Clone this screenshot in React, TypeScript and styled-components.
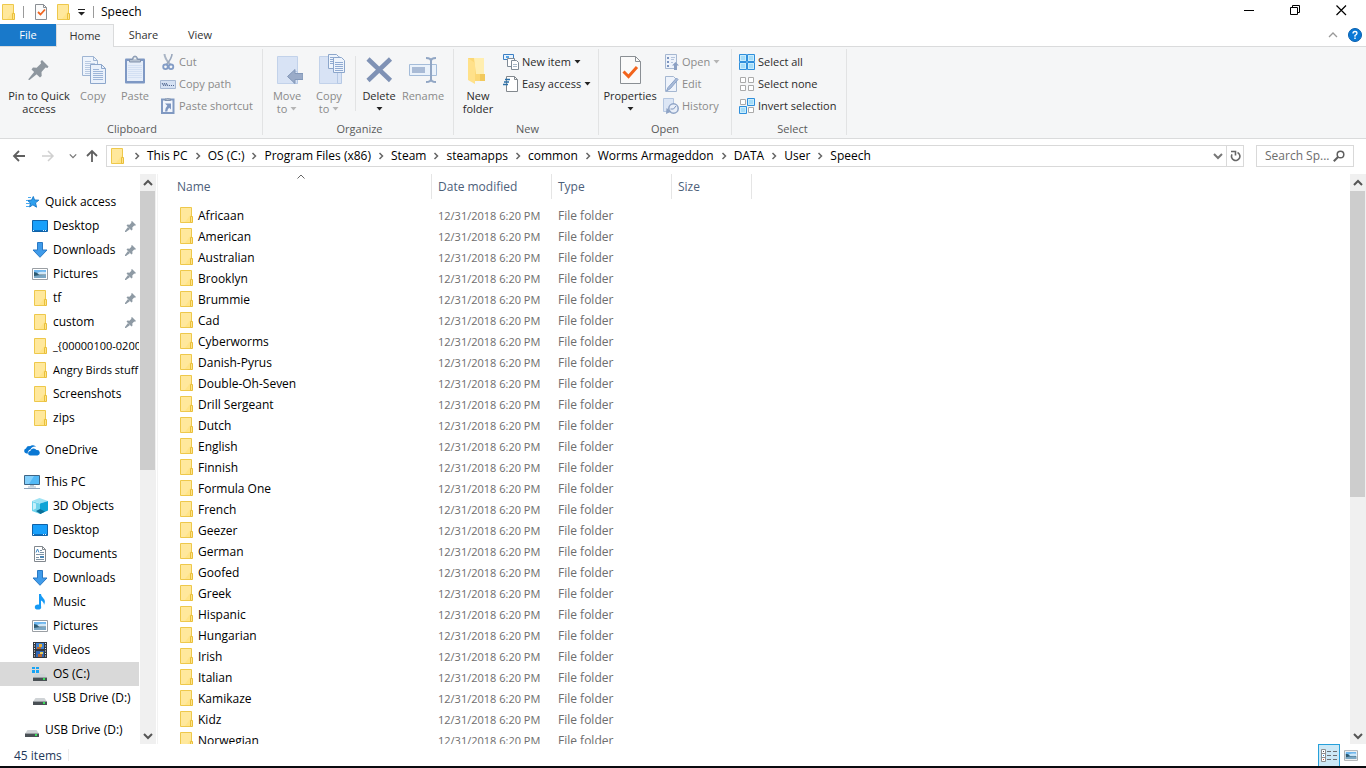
import React from "react";
import styled, { createGlobalStyle, css } from "styled-components";

const GlobalStyle = createGlobalStyle`
  *, *::before, *::after { box-sizing: border-box; }
  html, body { margin: 0; padding: 0; }
  body, button, input { font-family: "Open Sans", "Noto Sans", sans-serif; font-size: 12px; line-height: 16px; }
  body { background: #fff; color: #000; overflow: hidden; }
  button { margin: 0; padding: 0; border: 0; background: none; color: inherit; cursor: default; }
  svg { display: block; flex: none; }
`;

/* ---------- shell ---------- */

const Window = styled.div`
  display: flex;
  flex-direction: column;
  height: 100vh;
  border-bottom: 2px solid #0b0b0f;
`;

const TitleBar = styled.header`
  display: flex;
  align-items: center;
  height: 24px;
  flex: none;
  padding: 0 2px;
`;

const QuickButton = styled.button<{ $before?: number; $after?: number }>`
  display: flex;
  align-items: center;
  justify-content: center;
  margin-left: ${(p) => p.$before ?? 0}px;
  margin-right: ${(p) => p.$after ?? 7}px;
`;

const TitleRule = styled.span`
  width: 1px;
  height: 12px;
  background: #9a9a9a;
`;

const TitleText = styled.h1`
  flex: 1;
  margin: 0 0 0 7px;
  font-size: 12px;
  font-weight: 400;
`;

const WindowButton = styled.button`
  display: flex;
  align-items: flex-start;
  justify-content: center;
  width: 46px;
  height: 24px;
  padding-top: 5px;
`;

const TabRow = styled.nav`
  display: flex;
  height: 23px;
  flex: none;
  border-bottom: 1px solid #dadbdc;
`;

const Tab = styled.button<{ $kind?: "file" | "active"; $width: number }>`
  width: ${(p) => p.$width}px;
  height: 22px;
  color: #333;
  font-size: 11px;
  ${(p) =>
    p.$kind === "file" &&
    css`
      background: #1979ca;
      color: #fff;
    `}
  ${(p) =>
    p.$kind === "active" &&
    css`
      height: 23px;
      background: #f5f6f7;
      border: solid #dadbdc;
      border-width: 1px 1px 0;
    `}
`;

const TabTools = styled.div`
  display: flex;
  align-items: center;
  gap: 10px;
  margin-left: auto;
  padding-right: 4px;
`;

/* ---------- ribbon ---------- */

const Ribbon = styled.section`
  display: flex;
  height: 92px;
  flex: none;
  padding: 2px 0 3px;
  background: #f5f6f7;
  border-bottom: 1px solid #dadbdc;
`;

const Group = styled.div<{ $width: number; $pad: number }>`
  display: flex;
  flex-direction: column;
  justify-content: space-between;
  width: ${(p) => p.$width}px;
  border-right: 1px solid #e2e3e4;
  padding-left: ${(p) => p.$pad}px;
`;

const GroupBody = styled.div`
  display: flex;
  padding-top: 2px;
`;

const GroupLabel = styled.div`
  text-align: center;
  color: #5a5a5a;
  font-size: 11px;
  line-height: 12px;
`;

const BigButton = styled.button<{ $width: number; $disabled?: boolean }>`
  display: flex;
  flex-direction: column;
  align-items: center;
  width: ${(p) => p.$width}px;
  padding-top: 3px;
  font-size: 11px;
  line-height: 13px;
  white-space: nowrap;
  color: ${(p) => (p.$disabled ? "#8a8a8a" : "#2b2b2b")};
  svg + span { margin-top: 3px; }
`;

const LabelLine = styled.span`
  display: flex;
  align-items: center;
  gap: 3px;
  height: 13px;
`;

const ButtonRule = styled.span`
  width: 1px;
  height: 55px;
  margin: 5px 4px 0 5px;
  background: #e2e3e4;
`;

const SmallStack = styled.div<{ $before?: number }>`
  display: flex;
  flex-direction: column;
  margin-left: ${(p) => p.$before ?? 0}px;
`;

const SmallButton = styled.button<{ $disabled?: boolean }>`
  display: flex;
  align-items: center;
  gap: 3px;
  height: 22px;
  font-size: 11px;
  white-space: nowrap;
  color: ${(p) => (p.$disabled ? "#8a8a8a" : "#2b2b2b")};
`;

/* ---------- address row ---------- */

const AddressRow = styled.div`
  display: flex;
  align-items: center;
  height: 35px;
  flex: none;
  padding: 0 12px 2px 7px;
`;

const NavButton = styled.button<{ $width: number }>`
  display: flex;
  justify-content: center;
  width: ${(p) => p.$width}px;
`;

const AddressBox = styled.div`
  display: flex;
  align-items: center;
  flex: 1;
  height: 22px;
  margin-left: 2px;
  padding-left: 4px;
  border: 1px solid #d9d9d9;
`;

const Crumbs = styled.div`
  display: flex;
  flex: 1;
  margin-left: 2px;
`;

const Crumb = styled.button`
  display: flex;
  align-items: center;
  white-space: nowrap;
`;

const CrumbArrow = styled.span`
  display: flex;
  justify-content: center;
  width: 20px;
`;

const AddressEnd = styled.button<{ $ruled?: boolean }>`
  display: flex;
  align-items: center;
  justify-content: center;
  width: 17px;
  height: 20px;
  ${(p) => p.$ruled && "border-left: 1px solid #d9d9d9;"}
`;

const SearchBox = styled.label`
  display: flex;
  align-items: center;
  width: 98px;
  height: 22px;
  margin-left: 12px;
  padding: 0 8px;
  border: 1px solid #d9d9d9;
`;

const SearchInput = styled.input`
  flex: 1;
  min-width: 0;
  padding: 0;
  border: 0;
  outline: 0;
  background: none;
  &::placeholder { color: #6d6d6d; opacity: 1; }
`;

/* ---------- content ---------- */

const Main = styled.div`
  display: flex;
  flex: 1;
  min-height: 0;
`;

const Sidebar = styled.nav`
  width: 140px;
  flex: none;
  overflow: hidden;
  padding-top: 16px;
`;

const TreeSection = styled.div`
  margin-bottom: 8px;
`;

const TreeItem = styled.a<{ $root?: boolean; $selected?: boolean; $dense?: boolean }>`
  display: flex;
  align-items: center;
  gap: 5px;
  height: 24px;
  margin-right: 1px;
  padding-left: ${(p) => (p.$root ? 24 : 32)}px;
  color: #000;
  font-size: ${(p) => (p.$dense ? 11 : 12)}px;
  text-decoration: none;
  white-space: nowrap;
  overflow: hidden;
  background: ${(p) => (p.$selected ? "#d9d9d9" : "transparent")};
`;

const PinSlot = styled.span`
  margin-left: auto;
  padding-right: 3px;
`;

const ScrollTrack = styled.div`
  display: flex;
  flex-direction: column;
  width: 16px;
  flex: none;
  background: #f0f0f0;
`;

const ScrollButton = styled.button`
  display: flex;
  align-items: center;
  justify-content: center;
  width: 15px;
  height: 17px;
  flex: none;
`;

const ScrollRail = styled.div`
  flex: 1;
`;

const ScrollThumb = styled.div<{ $size: number }>`
  height: ${(p) => p.$size}%;
  margin-right: 1px;
  background: #cdcdcd;
`;

const FilePane = styled.main`
  flex: 1;
  min-width: 0;
  overflow: hidden;
  margin-left: 1px;
  padding-left: 2px;
  border-left: 1px solid #f3f3f3;
`;

const FileTable = styled.table`
  table-layout: fixed;
  width: 592px;
  border-collapse: collapse;
`;

const HeadCell = styled.th`
  height: 31px;
  padding: 0;
  vertical-align: top;
  text-align: left;
  font-weight: 400;
  color: #4c607a;
`;

const HeadLabel = styled.div<{ $pad?: number }>`
  position: relative;
  height: 25px;
  padding-left: ${(p) => p.$pad ?? 6}px;
  line-height: 25px;
  border-right: 1px solid #e5e5e5;
`;

const SortMark = styled.span`
  position: absolute;
  top: 0;
  left: 137px;
`;

const Cell = styled.td<{ $small?: boolean }>`
  height: 21px;
  padding: 0 0 0 6px;
  color: #6d6d6d;
  font-size: ${(p) => (p.$small ? 11 : 12)}px;
  white-space: nowrap;
`;

const FileName = styled.div`
  display: flex;
  align-items: center;
  gap: 4px;
  height: 21px;
  padding-left: 14px;
  color: #000;
  svg { margin-bottom: 1px; }
`;

const StatusBar = styled.footer`
  display: flex;
  align-items: center;
  height: 22px;
  flex: none;
  padding: 0 4px 0 14px;
  color: #1e395b;
`;

const StatusText = styled.span`
  padding-top: 2px;
`;

const StatusRule = styled.span`
  width: 1px;
  height: 12px;
  margin-left: 6px;
  background: #ececec;
`;

const ViewButtons = styled.div`
  display: flex;
  margin-left: auto;
`;

const ViewButton = styled.button<{ $active?: boolean }>`
  display: flex;
  align-items: center;
  justify-content: center;
  width: 22px;
  height: 22px;
  ${(p) => p.$active && "background: #cce8f6; border: 1px solid #26a0da; border-bottom: 0;"}
`;

/* ---------- icons ---------- */

const FolderIcon = ({ wide = false }: { wide?: boolean }) => (
  <svg width={wide ? 16 : 14} height="16" viewBox={wide ? "-2 0 16 16" : "0 0 14 16"} fill="none">
    <path d="M.5.5h11v15H.5z" fill="#ffe488" stroke="#eec84b" />
    <path d="M1 1h10v6L5 15H1z" fill="#ffe89c" />
    <path d="M10.500 9.500h2v6h-2z" fill="#ffe488" stroke="#e9bf3c" />
  </svg>
);

const CheckDocIcon = () => (
  <svg width="13" height="16" viewBox="0 0 13 16" fill="none">
    <path d="M.5.5h8l3 3v12H.5z" fill="#fbfbfb" stroke="#8a8f94" />
    <path d="M8.500.5v3h3" stroke="#8a8f94" />
    <path d="m3 8 2.500 2.500 4.500-5" stroke="#f0641e" strokeWidth="1.800" />
  </svg>
);

const Caret = ({ color = "#222" }: { color?: string }) => (
  <svg width="7" height="4" viewBox="0 0 7 4">
    <path d="M.5 0h6L3.500 3.500z" fill={color} />
  </svg>
);

const PinBigIcon = () => (
  <svg width="32" height="32" viewBox="0 0 32 32" fill="#8e979f">
    <path d="M19 6 25.500 12.500 24.500 14 22.500 13.500 18.500 18 18.700 22 17 23.500 8.500 15.500 10 13.500 13.700 13.700 18 9.500 17.500 7.500z" />
    <path d="M11.500 17.500 14 20 6.500 26H5.500V25z" />
  </svg>
);

const PinIcon = () => (
  <svg width="11" height="11" viewBox="0 0 11 11" fill="#8e9aa4">
    <path d="M7 0l4 4-1 .8-.8-.2L7.300 6.500l.2 2-1 1L1.500 4.500l1-1 2 .2L6.400 1.800 6.200.8z" />
    <path d="m3 6 2 2-4 3H0v-1z" />
  </svg>
);

const CopyIcon = () => (
  <svg width="32" height="32" viewBox="0 0 32 32">
    <path d="M5.500 2.500h11l4 4v15h-15z" fill="#eef4fc" stroke="#9fb5d3" />
    <path d="M16.500 2.500v4h4" fill="none" stroke="#9fb5d3" />
    <path d="M8 7.500h6M8 9.500h10M8 11.500h10M8 13.500h10M8 15.500h10M8 17.500h10M8 19.500h10" stroke="#b9cae2" />
    <path d="M13.500 10.500h11l4 4v15h-15z" fill="#eaf1fb" stroke="#8ca6cb" />
    <path d="M24.500 10.500v4h4" fill="none" stroke="#8ca6cb" />
    <path d="M16 15.500h6M16 17.500h10M16 19.500h10M16 21.500h10M16 23.500h10M16 25.500h10" stroke="#9db5d8" />
  </svg>
);

const PasteIcon = () => (
  <svg width="32" height="32" viewBox="0 0 32 32">
    <path d="M6 5.500q0-1 1-1h18q1 0 1 1v23q0 1-1 1H7q-1 0-1-1z" fill="#7e98c4" />
    <path d="M8 7h16v20H8z" fill="#e6eefa" />
    <path d="M9 11.500h14M9 13.500h14M9 15.500h14M9 17.500h14M9 19.500h14M9 21.500h14M9 23.500h14" stroke="#d3e0f3" />
    <path d="M10.500 8V5.500h3Q13.500 2 16 2T18.500 5.500h3V8z" fill="#b4c0d0" stroke="#8293ad" />
    <circle cx="16" cy="4.500" r="1" fill="#f5f6f7" />
  </svg>
);

const CutIcon = () => (
  <svg width="16" height="16" viewBox="0 0 16 16" fill="none">
    <path d="M4.500 0C4.500 3 6 6 10.500 11" stroke="#aab5c5" strokeWidth="2" />
    <path d="M12 0C12 3 10.500 6 6 11" stroke="#9aa8bd" strokeWidth="1.600" />
    <circle cx="5.500" cy="12.800" r="2.300" stroke="#829cc6" strokeWidth="1.800" />
    <circle cx="11" cy="12.800" r="2.300" stroke="#829cc6" strokeWidth="1.800" />
  </svg>
);

const CopyPathIcon = () => (
  <svg width="16" height="16" viewBox="0 0 16 16">
    <path d="M.5 4.500h15v8H.5z" fill="#d5e1f3" stroke="#a6b8d3" />
    <path d="m2 7 2 3m0-3 2 3m0-3 2 3" stroke="#4f6690" fill="none" />
    <path d="M9 9h1v1H9zM11 9h1v1h-1zM13 9h1v1h-1z" fill="#4f6690" />
  </svg>
);

const PasteShortcutIcon = () => (
  <svg width="16" height="16" viewBox="0 0 16 16">
    <path d="M2 1.500h11.500v13.500H2z" fill="#f1f5fc" stroke="#8099c2" strokeWidth="2" />
    <path d="M5 2.500V1h1.500q1-1 2.500 0h1.500v1.500z" fill="#b4c0d0" stroke="#8293ad" />
    <path d="M5 5.500h6v6L9.200 9.700Q7.500 11 7.300 13.500H5Q5 10 7.300 7.800z" fill="#7d96c0" />
  </svg>
);

const MoveIcon = () => (
  <svg width="32" height="32" viewBox="0 0 32 32">
    <path d="M6.500 2.500h20v27h-20z" fill="#d8e3f5" stroke="#c2d2ea" />
    <path d="M22.500 17.500h4v12h-4z" fill="#d8e3f5" stroke="#b6c9e5" />
    <path d="M16.500 22.500 24 15.500v4h8v6h-8v4z" fill="#9aabc8" stroke="#8398b9" />
  </svg>
);

const CopyToIcon = () => (
  <svg width="32" height="32" viewBox="0 0 32 32">
    <path d="M6.500 2.500h20v27h-20z" fill="#d8e3f5" stroke="#c2d2ea" />
    <path d="M24.500 17.500h4v12h-4z" fill="#d8e3f5" stroke="#b6c9e5" />
    <path d="M15.500.5h8l2 2v12h-10z" fill="#eef4fc" stroke="#8ca6cb" />
    <path d="M20.500 3.500h8l3 3v12h-11z" fill="#eef4fc" stroke="#8ca6cb" />
    <path d="M17 3.500h5M17 5.500h3M17 7.500h3M17 9.500h3M22 8.500h8M22 10.500h8M22 12.500h8M22 14.500h8M22 16.500h8" stroke="#91abd2" />
  </svg>
);

const DeleteIcon = () => (
  <svg width="32" height="32" viewBox="0 0 32 32">
    <path d="M5 5 27.500 26.500M27.500 5 5 26.500" stroke="#7f92b5" strokeWidth="4.500" />
  </svg>
);

const RenameIcon = () => (
  <svg width="32" height="32" viewBox="0 0 32 32" fill="none">
    <path d="M2.500 10.500h27v11h-27z" fill="#eaf2fb" stroke="#a4bcd9" />
    <path d="M5 13h13v6H5z" fill="#a9bbd6" />
    <path d="M19 4q5 0 5 3v18q0 3-5 3M29 4q-5 0-5 3v18q0 3 5 3" stroke="#91a6c4" strokeWidth="2" />
  </svg>
);

const NewFolderIcon = () => (
  <svg width="32" height="32" viewBox="0 0 32 32">
    <path d="M6 4h16v23H9l-3-2z" fill="#fbd775" />
    <path d="M12 4h10v16h-8z" fill="#ffeeb0" />
    <path d="M6 4l7 5v21l-7-4z" fill="#ffe18a" />
    <path d="M18 20h5v7h-5z" fill="#f2c95c" />
  </svg>
);

const NewItemIcon = () => (
  <svg width="16" height="16" viewBox="0 0 16 16">
    <path d="M.5.5h10v5H.5z" fill="#e8f3fd" stroke="#3b7fc4" />
    <path d="M3 2h3v2H3z" fill="#56a3e6" />
    <path d="M4.500 4.500h7v8h-7z" fill="#fff" stroke="#7f8b97" />
    <path d="M8.500 6.500h5l2 2v7h-7z" fill="#fff" stroke="#7f8b97" />
    <path d="M10 10.500h4M10 12.500h4" stroke="#a8b8c8" />
  </svg>
);

const EasyAccessIcon = () => (
  <svg width="16" height="16" viewBox="0 0 16 16">
    <path d="M3.500.5h8l3 3v12h-11z" fill="#fff" stroke="#82888e" />
    <path d="M11.500.5v3h3" fill="none" stroke="#82888e" />
    <path d="M2 3.500h5M1 6h5M0 8.500h5" stroke="#2a6fa8" strokeWidth="1.300" />
  </svg>
);

const PropertiesIcon = () => (
  <svg width="32" height="32" viewBox="0 0 32 32" fill="none">
    <path d="M6.500 2.500h15l5 5v22h-20z" fill="#fafafa" stroke="#8a8f94" />
    <path d="M21.500 2.500v5h5" stroke="#8a8f94" />
    <path d="m9.500 17.500 5 5 8.500-9.500" stroke="#f2641d" strokeWidth="3" />
  </svg>
);

const OpenIcon = () => (
  <svg width="16" height="16" viewBox="0 0 16 16">
    <path d="M2.500.5h11v14h-11z" fill="#eef3fb" stroke="#a5b7d1" />
    <path d="M4 3h2v2H4zM4 7h2v2H4zM4 11h2v2H4z" fill="#7d95bf" />
    <path d="M8 3.500h4M8 5.500h3M8 8.500h2" stroke="#b4c4dc" />
    <path d="M12.500 8 16 11.500h-2V16h-3v-4.500H9z" fill="#8ba0c3" />
  </svg>
);

const EditIcon = () => (
  <svg width="16" height="16" viewBox="0 0 16 16">
    <path d="M2.500.5h8l3 3v12h-11z" fill="#eef3fb" stroke="#a5b7d1" />
    <path d="M13.500 2 15 3.500 7.500 12.500 3.500 15 5 11.500z" fill="#a9bbd8" stroke="#8ba3c9" />
  </svg>
);

const HistoryIcon = () => (
  <svg width="16" height="16" viewBox="0 0 16 16">
    <path d="M.5.5h10v13H.5z" fill="#dce6f5" stroke="#b5c7e1" />
    <circle cx="10.500" cy="10.500" r="4.700" fill="#e8eef8" stroke="#8ea3c5" strokeWidth="1.500" />
    <path d="M3 16 3.500 10 8.500 13.500z" fill="#8ea3c5" />
    <path d="M13 8 10.500 11H7.500" stroke="#7c93b9" fill="none" />
  </svg>
);

const SelectIcon = ({ on }: { on: boolean[] }) => (
  <svg width="16" height="16" viewBox="0 0 16 16">
    {[
      [0, 0],
      [8, 0],
      [0, 8],
      [8, 8],
    ].map(([x, y], i) =>
      on[i] ? (
        <g key={i}>
          <path d={`M${x + 0.5} ${y + 0.5}h7v7h-7z`} fill="#c9ecfc" stroke="#2f8fdc" />
          <path d={`M${x + 2} ${y + 2}h4v4h-4z`} fill="#a5dcf8" />
        </g>
      ) : (
        <path key={i} d={`M${x + 1.5} ${y + 1.5}h5v5h-5z`} fill="#fff" stroke="#aaa" />
      ),
    )}
  </svg>
);

type ChevronProps = { dir: "up" | "down" | "right"; color?: string; width?: number; size?: number };

const Chevron = ({ dir, color = "#555", width = 2, size = 10 }: ChevronProps) => {
  const d = { up: "M1 7l4-4 4 4", down: "M1 3l4 4 4-4", right: "M3.500 2 6.500 5 3.500 8" }[dir];
  return (
    <svg width={size} height={size} viewBox="0 0 10 10" fill="none">
      <path d={d} stroke={color} strokeWidth={width} />
    </svg>
  );
};

const Arrow = ({ dir, color }: { dir: "left" | "right" | "up"; color: string }) => {
  const d = { left: "M13 7H2M7 2 2 7l5 5", right: "M1 7h11M7 2l5 5-5 5", up: "M7 13V2M2 7l5-5 5 5" }[dir];
  return (
    <svg width="14" height="14" viewBox="0 0 14 14" fill="none">
      <path d={d} stroke={color} strokeWidth={dir === "right" ? 1.5 : 1.8} />
    </svg>
  );
};

const StarIcon = () => (
  <svg width="16" height="16" viewBox="0 0 16 16">
    <path d="M9.300 2.500l1.200 3.500 4.300.2-3.300 2.600 1 4.400-3.600-2.400L5.600 13l.9-4L3.600 6.500l4-.4z" fill="#2ea0ee" stroke="#1b7ccc" />
    <path d="M4 3.500h3M2 6.500h2M2 9.500h4M2 12.500h3" stroke="#4aaaf0" />
  </svg>
);

const DesktopIcon = () => (
  <svg width="16" height="16" viewBox="0 0 16 16">
    <path d="M.5 2.500h15v11H.5z" fill="#18a0fb" stroke="#0f62a8" />
    <path d="M1 12h14v1H1z" fill="#0d6fbe" />
    <path d="M11 12h1v1h-1zM13 12h1v1h-1zM1 12h1v1H1z" fill="#dff1ff" />
  </svg>
);

const DownloadIcon = () => (
  <svg width="16" height="16" viewBox="0 0 16 16">
    <path d="M5.500.5h5v7.500h4.500L8 15.300 1 8h4.500z" fill="#3f9bea" stroke="#2a79c4" />
  </svg>
);

const PictureIcon = ({ width = 16, height = 16 }: { width?: number; height?: number }) => (
  <svg width={width} height={height} viewBox="0 2 16 12">
    <path d="M.5 2.500h15v11H.5z" fill="#fff" stroke="#9a9fa4" />
    <path d="M2 4h12v4H2z" fill="#6fb7ee" />
    <path d="M5 7q4-2 9-1v2H5z" fill="#cfe7f8" />
    <path d="M2 6q3 0 5 2.500h7V12H2z" fill="#2d5a72" />
    <path d="M2 10q6-1.500 12-1v3H2z" fill="#7ba7c4" />
  </svg>
);

const CloudIcon = () => (
  <svg width="16" height="16" viewBox="0 0 16 16" fill="#0a78d4">
    <path d="M4 11.500H2.500A2.500 2.500 0 0 1 2 6.600 3.500 3.500 0 0 1 6 4.200a4 4 0 0 1 6 .8A4 4 0 0 0 6.500 7.500 3 3 0 0 0 4 11.500z" />
    <path d="M6.500 13.500a2.300 2.300 0 0 1-.2-4.600 3.400 3.400 0 0 1 6.200-.8 2.700 2.700 0 0 1 1 5.400z" />
  </svg>
);

const PcIcon = () => (
  <svg width="16" height="16" viewBox="0 0 16 16">
    <path d="M.5 1.500h15v9H.5z" fill="#52b9f7" stroke="#3f6585" />
    <path d="M1 2h9L5 10H1z" fill="#83cffb" />
    <path d="M6 11h4v1.500H6z" fill="#b9c7d3" />
    <path d="M0 14.500h16" stroke="#8fa4bb" />
    <path d="M4 13h8" stroke="#a9bccd" />
  </svg>
);

const CubeIcon = () => (
  <svg width="16" height="16" viewBox="0 0 16 16">
    <path d="M0 3l8 2.500V16L0 13z" fill="#6fd3ec" />
    <path d="M0 3 7.500 0 16 3 8 5.500z" fill="#9fe3f4" />
    <path d="M8 5.500 16 3v9.500L8 16z" fill="#0fa4d6" />
    <path d="M1 4.500 4 5.500v5L1 12z" fill="#c6f0fa" />
    <path d="M4 13l4-2 5 2.500L8.500 16z" fill="#0b6f98" />
  </svg>
);

const DocumentIcon = () => (
  <svg width="16" height="16" viewBox="0 0 16 16">
    <path d="M2.500.5h8l3 3v12h-11z" fill="#fff" stroke="#82888e" />
    <path d="M10.500.5v3h3" fill="none" stroke="#82888e" />
    <path d="M4 6.500 5.500 3 7 6.500" fill="none" stroke="#3c87c4" />
    <path d="M8 4.500h2M8 6.500h4M4 8.500h8M4 11.500h3M4 13.500h8" stroke="#7d93a5" />
    <path d="M8 10h4v2H8z" fill="#4c86b4" />
  </svg>
);

const MusicIcon = () => (
  <svg width="16" height="16" viewBox="0 0 16 16">
    <path d="M7 0h2q0 2.500 2.500 4.500T12 11q0-3-3-4.500V13H7z" fill="#169af5" />
    <ellipse cx="6" cy="13" rx="3.200" ry="2.600" fill="#169af5" />
  </svg>
);

const VideoIcon = () => (
  <svg width="16" height="16" viewBox="0 0 16 16">
    <path d="M1 0h14v16H1z" fill="#333840" />
    <path d="M4 1h8v6H4z" fill="#3f7fd0" />
    <path d="M4 9h8v6H4z" fill="#2f66b5" />
    <path d="M7 2h3v3H7z" fill="#e8b034" />
    <path d="M5 5h4v2H5zM6 12h4v3H6z" fill="#b5652f" />
    <path d="M8 10h3v2H8z" fill="#e0cf60" />
    <path d="M2.500 1v15M13.500 1v15" stroke="#f2f2f2" strokeDasharray="1 1.500" />
  </svg>
);

const DriveIcon = ({ system = false }: { system?: boolean }) => (
  <svg width="16" height="16" viewBox="0 0 16 16">
    <path d="M3.500 8h9l2 3h-13z" fill="#cfd3d6" />
    <path d="M1 11h14v4H1z" fill="#4a5055" />
    <path d="M1 11h14v1H1z" fill="#9a9fa3" />
    <path d="M11 12h2v2h-2z" fill="#38e05a" />
    {system && (
      <g>
        <path d="M0 0h7v8H0z" fill="#d9d9d9" />
        <path d="M0 1h3v2H0zM4 1h3v2H4zM0 4h3v3H0zM4 4h3v3H4z" fill="#18a4f5" />
      </g>
    )}
  </svg>
);

/* ---------- data ---------- */

type Entry = { name: string; icon: React.ReactNode; pinned?: boolean; selected?: boolean; dense?: boolean };

const tree: Entry[][] = [
  [
    { name: "Quick access", icon: <StarIcon /> },
    { name: "Desktop", icon: <DesktopIcon />, pinned: true },
    { name: "Downloads", icon: <DownloadIcon />, pinned: true },
    { name: "Pictures", icon: <PictureIcon />, pinned: true },
    { name: "tf", icon: <FolderIcon wide />, pinned: true },
    { name: "custom", icon: <FolderIcon wide />, pinned: true },
    { name: "_{00000100-0200", icon: <FolderIcon wide />, dense: true },
    { name: "Angry Birds stuff", icon: <FolderIcon wide />, dense: true },
    { name: "Screenshots", icon: <FolderIcon wide /> },
    { name: "zips", icon: <FolderIcon wide /> },
  ],
  [{ name: "OneDrive", icon: <CloudIcon /> }],
  [
    { name: "This PC", icon: <PcIcon /> },
    { name: "3D Objects", icon: <CubeIcon /> },
    { name: "Desktop", icon: <DesktopIcon /> },
    { name: "Documents", icon: <DocumentIcon /> },
    { name: "Downloads", icon: <DownloadIcon /> },
    { name: "Music", icon: <MusicIcon /> },
    { name: "Pictures", icon: <PictureIcon /> },
    { name: "Videos", icon: <VideoIcon /> },
    { name: "OS (C:)", icon: <DriveIcon system />, selected: true },
    { name: "USB Drive (D:)", icon: <DriveIcon /> },
  ],
  [{ name: "USB Drive (D:)", icon: <DriveIcon /> }],
];

const crumbs = ["This PC", "OS (C:)", "Program Files (x86)", "Steam", "steamapps", "common", "Worms Armageddon", "DATA", "User", "Speech"];

const files = [
  "Africaan", "American", "Australian", "Brooklyn", "Brummie", "Cad", "Cyberworms", "Danish-Pyrus", "Double-Oh-Seven",
  "Drill Sergeant", "Dutch", "English", "Finnish", "Formula One", "French", "Geezer", "German", "Goofed", "Greek",
  "Hispanic", "Hungarian", "Irish", "Italian", "Kamikaze", "Kidz", "Norwegian",
];

const Scrollbar = ({ size }: { size: number }) => (
  <ScrollTrack>
    <ScrollButton aria-label="Scroll up"><Chevron dir="up" /></ScrollButton>
    <ScrollRail><ScrollThumb $size={size} /></ScrollRail>
    <ScrollButton aria-label="Scroll down"><Chevron dir="down" /></ScrollButton>
  </ScrollTrack>
);

export default function App() {
  return (
    <Window>
      <GlobalStyle />
      <TitleBar>
        <QuickButton aria-label="Window menu"><FolderIcon /></QuickButton>
        <TitleRule />
        <QuickButton aria-label="Properties" $before={11} $after={9}><CheckDocIcon /></QuickButton>
        <QuickButton aria-label="New folder" $after={6}><FolderIcon /></QuickButton>
        <QuickButton aria-label="Customize Quick Access Toolbar">
          <svg width="9" height="8" viewBox="0 0 9 8"><path d="M1 1h7v1H1zM1 4h7L4.500 7.500z" fill="#222" /></svg>
        </QuickButton>
        <TitleRule />
        <TitleText>Speech</TitleText>
        <WindowButton aria-label="Minimize">
          <svg width="11" height="11" viewBox="0 0 11 11"><path d="M0 5.500h10" stroke="#000" /></svg>
        </WindowButton>
        <WindowButton aria-label="Restore">
          <svg width="11" height="11" viewBox="0 0 11 11" fill="none" stroke="#000"><path d="M.5 2.500h7v7h-7zM2.500 2.500v-2h7v7h-2" /></svg>
        </WindowButton>
        <WindowButton aria-label="Close">
          <svg width="11" height="11" viewBox="0 0 11 11" stroke="#000" strokeWidth="1.200"><path d="M.5.5l9.500 9.500M10 .5.5 10" /></svg>
        </WindowButton>
      </TitleBar>

      <TabRow>
        <Tab $kind="file" $width={56}>File</Tab>
        <Tab $kind="active" $width={58}>Home</Tab>
        <Tab $width={59}>Share</Tab>
        <Tab $width={54}>View</Tab>
        <TabTools>
          <button aria-label="Minimize the Ribbon"><Chevron dir="up" color="#999" width={1.3} /></button>
          <button aria-label="Help">
            <svg width="14" height="14" viewBox="0 0 14 14">
              <circle cx="7" cy="7" r="6.500" fill="#0a78d6" stroke="#085fae" />
              <path d="M5 5.500Q5 3.500 7 3.500T9 5.300Q9 6.400 7 7.500v1.200" fill="none" stroke="#fff" strokeWidth="1.300" />
              <path d="M6.300 9.600h1.400V11H6.300z" fill="#fff" />
            </svg>
          </button>
        </TabTools>
      </TabRow>

      <Ribbon>
        <Group $width={263} $pad={2}>
          <GroupBody>
            <BigButton $width={74}><PinBigIcon /><LabelLine>Pin to Quick</LabelLine><LabelLine>access</LabelLine></BigButton>
            <BigButton $width={34} $disabled><CopyIcon /><LabelLine>Copy</LabelLine></BigButton>
            <BigButton $width={50} $disabled><PasteIcon /><LabelLine>Paste</LabelLine></BigButton>
            <SmallStack>
              <SmallButton $disabled><CutIcon />Cut</SmallButton>
              <SmallButton $disabled><CopyPathIcon />Copy path</SmallButton>
              <SmallButton $disabled><PasteShortcutIcon />Paste shortcut</SmallButton>
            </SmallStack>
          </GroupBody>
          <GroupLabel>Clipboard</GroupLabel>
        </Group>
        <Group $width={191} $pad={3}>
          <GroupBody>
            <BigButton $width={42} $disabled><MoveIcon /><LabelLine>Move</LabelLine><LabelLine>to <Caret color="#b5b5b5" /></LabelLine></BigButton>
            <BigButton $width={42} $disabled><CopyToIcon /><LabelLine>Copy</LabelLine><LabelLine>to <Caret color="#b5b5b5" /></LabelLine></BigButton>
            <ButtonRule />
            <BigButton $width={38}><DeleteIcon /><LabelLine>Delete</LabelLine><LabelLine><Caret /></LabelLine></BigButton>
            <BigButton $width={50} $disabled><RenameIcon /><LabelLine>Rename</LabelLine></BigButton>
          </GroupBody>
          <GroupLabel>Organize</GroupLabel>
        </Group>
        <Group $width={145} $pad={3}>
          <GroupBody>
            <BigButton $width={42}><NewFolderIcon /><LabelLine>New</LabelLine><LabelLine>folder</LabelLine></BigButton>
            <SmallStack $before={4}>
              <SmallButton><NewItemIcon />New item <Caret /></SmallButton>
              <SmallButton><EasyAccessIcon />Easy access <Caret /></SmallButton>
            </SmallStack>
          </GroupBody>
          <GroupLabel>New</GroupLabel>
        </Group>
        <Group $width={133} $pad={0}>
          <GroupBody>
            <BigButton $width={62}><PropertiesIcon /><LabelLine>Properties</LabelLine><LabelLine><Caret /></LabelLine></BigButton>
            <SmallStack $before={2}>
              <SmallButton $disabled><OpenIcon />Open <Caret color="#b5b5b5" /></SmallButton>
              <SmallButton $disabled><EditIcon />Edit</SmallButton>
              <SmallButton $disabled><HistoryIcon />History</SmallButton>
            </SmallStack>
          </GroupBody>
          <GroupLabel>Open</GroupLabel>
        </Group>
        <Group $width={115} $pad={7}>
          <GroupBody>
            <SmallStack>
              <SmallButton><SelectIcon on={[true, true, true, true]} />Select all</SmallButton>
              <SmallButton><SelectIcon on={[false, false, false, false]} />Select none</SmallButton>
              <SmallButton><SelectIcon on={[false, true, true, false]} />Invert selection</SmallButton>
            </SmallStack>
          </GroupBody>
          <GroupLabel>Select</GroupLabel>
        </Group>
      </Ribbon>

      <AddressRow>
        <NavButton $width={23} aria-label="Back"><Arrow dir="left" color="#5f5f5f" /></NavButton>
        <NavButton $width={36} aria-label="Forward"><Arrow dir="right" color="#d0d0d0" /></NavButton>
        <NavButton $width={13} aria-label="Recent locations"><Chevron dir="down" color="#777" width={1.6} size={8} /></NavButton>
        <NavButton $width={25} aria-label="Up"><Arrow dir="up" color="#5f5f5f" /></NavButton>
        <AddressBox>
          <FolderIcon />
          <Crumbs>
            {crumbs.map((c) => (
              <Crumb key={c}><CrumbArrow><Chevron dir="right" color="#666" width={1.5} /></CrumbArrow>{c}</Crumb>
            ))}
          </Crumbs>
          <AddressEnd aria-label="Previous locations"><Chevron dir="down" color="#777" /></AddressEnd>
          <AddressEnd $ruled aria-label="Refresh">
            <svg width="11" height="12" viewBox="0 0 11 12" fill="none" stroke="#666" strokeWidth="1.600">
              <path d="M7.500 2.500A4.200 4.200 0 1 1 2 4.300M1 1.500h4.500v4" />
            </svg>
          </AddressEnd>
        </AddressBox>
        <SearchBox>
          <SearchInput aria-label="Search Speech" placeholder="Search Sp..." />
          <svg width="12" height="12" viewBox="0 0 12 12" fill="none" stroke="#5f5f5f">
            <circle cx="7.500" cy="4.500" r="3.300" strokeWidth="1.500" />
            <path d="M5 7 .8 11.200" strokeWidth="2" />
          </svg>
        </SearchBox>
      </AddressRow>

      <Main>
        <Sidebar>
          {tree.map((section, s) => (
            <TreeSection key={s}>
              {section.map((e, i) => (
                <TreeItem key={i} href="#" $root={i === 0} $selected={e.selected} $dense={e.dense}>
                  {e.icon}{e.name}
                  {e.pinned && <PinSlot><PinIcon /></PinSlot>}
                </TreeItem>
              ))}
            </TreeSection>
          ))}
        </Sidebar>
        <Scrollbar size={52} />
        <FilePane>
          <FileTable>
            <colgroup>
              <col width="272" /><col width="120" /><col width="120" /><col width="80" />
            </colgroup>
            <thead>
              <tr>
                <HeadCell>
                  <HeadLabel $pad={17}>
                    Name
                    <SortMark><svg width="8" height="5" viewBox="0 0 8 5" fill="none"><path d="M.5 4.500 4 1l3.500 3.500" stroke="#666" /></svg></SortMark>
                  </HeadLabel>
                </HeadCell>
                <HeadCell><HeadLabel>Date modified</HeadLabel></HeadCell>
                <HeadCell><HeadLabel>Type</HeadLabel></HeadCell>
                <HeadCell><HeadLabel>Size</HeadLabel></HeadCell>
              </tr>
            </thead>
            <tbody>
              {files.map((f) => (
                <tr key={f}>
                  <Cell><FileName><FolderIcon />{f}</FileName></Cell>
                  <Cell $small>12/31/2018 6:20 PM</Cell>
                  <Cell>File folder</Cell>
                  <Cell />
                </tr>
              ))}
            </tbody>
          </FileTable>
        </FilePane>
        <Scrollbar size={57} />
      </Main>

      <StatusBar>
        <StatusText>45 items</StatusText>
        <StatusRule />
        <ViewButtons>
          <ViewButton $active aria-label="Details view">
            <svg width="16" height="13" viewBox="0 0 16 13" fill="none">
              <path d="M.5.500h4v12h-4zM.5 4.500h4M.5 8.500h4" fill="#fff" stroke="#8e8e8e" />
              <path d="M6 2.500h4M12 2.500h4M6 6.500h4M12 6.500h4M6 10.500h4M12 10.500h4" stroke="#6a6f73" />
              <path d="M2 2h1v1H2z" fill="#555" />
              <path d="M2 6h1v1H2z" fill="#2a8ad4" />
              <path d="M2 10h1v1H2z" fill="#d9512c" />
            </svg>
          </ViewButton>
          <ViewButton aria-label="Large thumbnails view"><PictureIcon width={14} height={11} /></ViewButton>
        </ViewButtons>
      </StatusBar>
    </Window>
  );
}
